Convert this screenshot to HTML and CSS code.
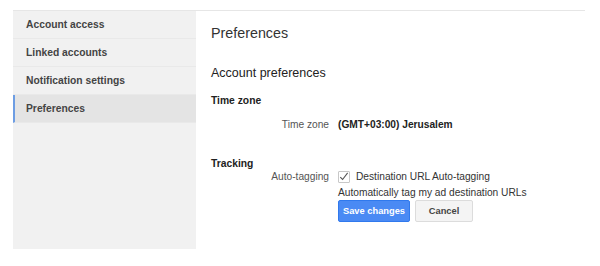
FILE: index.html
```html
<!DOCTYPE html>
<html lang="en">
<head>
    <meta charset="UTF-8">
    <title>Preferences</title>
    <link rel="stylesheet" href="styles.css">
</head>
<body>
    <div class="page">
        <!-- Menu lateral -->
        <div class="sidebar">
            <div class="nav-item">Account access</div>
            <div class="nav-item">Linked accounts</div>
            <div class="nav-item">Notification settings</div>
            <div class="nav-item active">Preferences</div>
        </div>

        <div class="main">
            <h1>Preferences</h1>
            <h2>Account preferences</h2>

            <div class="section-title">Time zone</div>
            <div class="row">
                <div class="label">Time zone</div>
                <div class="value strong">(GMT+03:00) Jerusalem</div>
            </div>

            <div class="section-title tracking">Tracking</div>
            <div class="row">
                <div class="label">Auto-tagging</div>
                <div class="value">
                    <div class="check-line">
                        <span class="checkbox">
                            <svg width="12" height="12" viewBox="0 0 12 12">
                                <path d="M2.5 6.2 L5 8.7 L10.5 1.5" fill="none" stroke="#555" stroke-width="1.2"/>
                            </svg>
                        </span>
                        Destination URL Auto-tagging
                    </div>
                    <div class="hint">Automatically tag my ad destination URLs</div>
                    <div class="buttons">
                        <button class="btn btn-primary">Save changes</button>
                        <button class="btn">Cancel</button>
                    </div>
                </div>
            </div>
        </div>
    </div>
</body>
</html>
```

FILE: styles.css
```css
* {
    box-sizing: border-box;
    margin: 0;
    padding: 0;
}

body {
    font-family: 'Liberation Sans', Arial, sans-serif;
    background: #fff;
    color: #222;
}

.page {
    display: flex;
    margin: 10px 0 0 13px;
    width: 572px;
    border-top: 1px solid #e6e6e6;
}

/* Menu lateral */
.sidebar {
    width: 183px;
    height: 238px;
    background: #f1f1f1;
}

.nav-item {
    height: 28px;
    line-height: 27px;
    padding-left: 13px;
    font-size: 10.3px;
    font-weight: bold;
    color: #444;
    border-bottom: 1px solid #e9e9e9;
}

.nav-item.active {
    background: #e4e4e4;
    border-left: 2px solid #6d9de3;
    padding-left: 11px;
}

.main {
    flex: 1;
    padding: 13px 0 0 15px;
}

h1 {
    font-size: 14.3px;
    font-weight: normal;
    line-height: 18px;
    color: #333;
}

h2 {
    font-size: 12.5px;
    font-weight: normal;
    line-height: 16px;
    color: #222;
    margin-top: 23px;
}

.section-title {
    font-size: 10.3px;
    font-weight: bold;
    line-height: 14px;
    margin-top: 13px;
    color: #222;
}

.section-title.tracking {
    margin-top: 25px;
}

.row {
    display: flex;
    gap: 9px;
    margin-top: 10px;
    font-size: 10.2px;
    line-height: 14px;
}

.section-title.tracking + .row {
    margin-top: -1px;
}

.label {
    width: 118px;
    text-align: right;
    color: #555;
}

.strong {
    font-weight: bold;
    color: #222;
}

.check-line {
    display: flex;
    align-items: center;
    gap: 6px;
    color: #333;
}

.checkbox {
    display: inline-flex;
    width: 12px;
    height: 12px;
    border: 1px solid #c8c8c8;
    border-radius: 1px;
    background: #fff;
}

.checkbox svg {
    margin: -1px 0 0 -1px;
}

.hint {
    margin-top: 2px;
    color: #333;
}

.buttons {
    display: flex;
    gap: 5px;
    margin-top: 0;
}

.btn {
    height: 22px;
    width: 58px;
    padding: 0;
    white-space: nowrap;
    font-family: inherit;
    font-size: 9.3px;
    font-weight: bold;
    color: #444;
    background: #f4f4f4;
    border: 1px solid #dcdcdc;
    border-radius: 2px;
}

.btn-primary {
    width: 72px;
    color: #fff;
    background: #4a8af4;
    border-color: #3079ed;
}
```
